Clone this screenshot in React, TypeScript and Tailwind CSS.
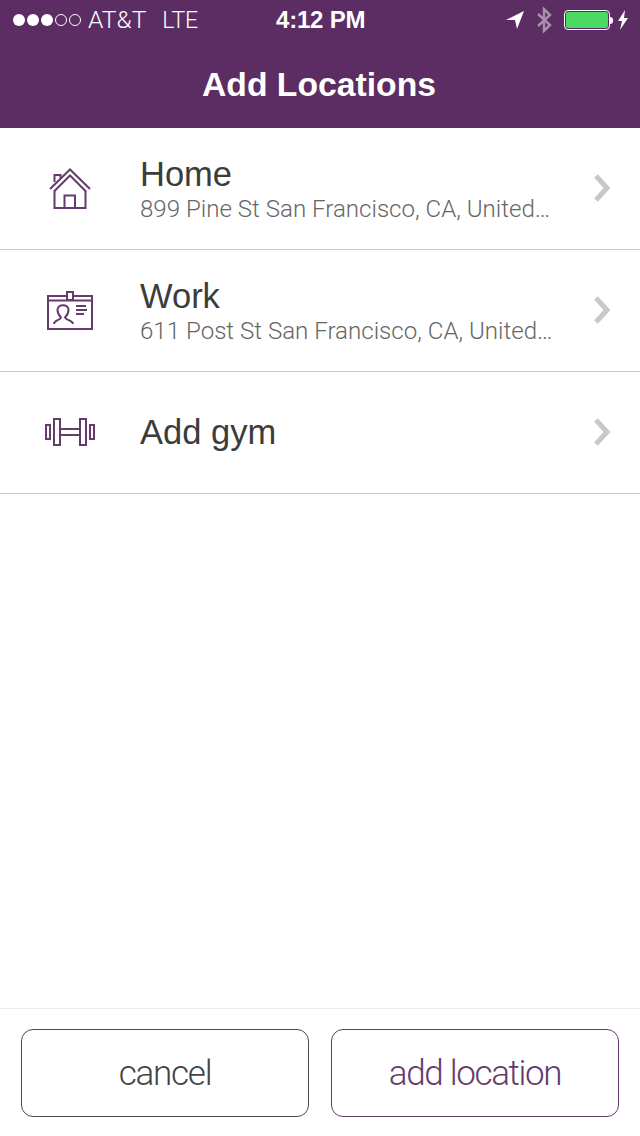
import React from 'react';

const SANS = 'font-["Liberation_Sans",Arial,sans-serif]';
const LIGHT = 'font-["Roboto",Arial,sans-serif] font-light';

const HomeIcon = () => (
  <svg width="42" height="41" viewBox="0 0 42 41" fill="none" stroke="#653a6c" strokeWidth="2">
    <path d="M1 21 L21 1.5 L41 21" />
    <path d="M5.5 23 L21 7.5 L36.5 23" />
    <path d="M5.5 22 V40 H36.5 V22" />
    <path d="M15.5 40 V27.5 H26 V40" />
    <path d="M5.5 14 V7 H11.5 V10" />
  </svg>
);

const BadgeIcon = () => (
  <svg width="48" height="41" viewBox="0 0 48 41" fill="none" stroke="#653a6c" strokeWidth="2">
    <rect x="2" y="6" width="44" height="33" />
    <path d="M2 10.5 H46" />
    <rect x="21" y="2" width="6" height="8" fill="#fff" />
    <path d="M8 34 C8 30 14 30.5 15 27.5 C12.5 25 11.5 22 11.5 20 C11.5 13.5 22.5 13.5 22.5 20 C22.5 22 21.5 25 19 27.5 C20 30.5 26.5 30 27 34" />
    <path d="M30 16 H40 M30 20 H41 M30 24 H38" />
  </svg>
);

const GymIcon = () => (
  <svg width="50" height="28" viewBox="0 0 50 28" fill="none" stroke="#653a6c" strokeWidth="2">
    <rect x="1" y="7" width="4" height="14" />
    <rect x="9" y="1" width="6" height="26" />
    <rect x="35" y="1" width="6" height="26" />
    <rect x="45" y="7" width="4" height="14" />
    <path d="M15 11 H35 M15 17 H35" />
  </svg>
);

const StatusBar = () => (
  <div className={`flex h-10 items-center pl-[13px] pr-[12px] text-white ${SANS}`}>
    <div className="flex w-[200px] items-center">
      <div className="flex items-center gap-[2px]">
        <span className="h-[12px] w-[12px] rounded-full bg-white" />
        <span className="h-[12px] w-[12px] rounded-full bg-white" />
        <span className="h-[12px] w-[12px] rounded-full bg-white" />
        <span className="h-[12px] w-[12px] rounded-full border border-white" />
        <span className="h-[12px] w-[12px] rounded-full border border-white" />
      </div>
      <span className={`ml-[7px] text-[24.6px] leading-none ${LIGHT}`}>AT&amp;T</span>
      <span className={`ml-[16px] text-[23px] leading-none ${LIGHT}`}>LTE</span>
    </div>
    <span className="ml-[63px] text-[24px] font-bold leading-none tracking-[-0.2px]">4:12 PM</span>
    <div className="ml-auto flex items-center">
      <svg width="18" height="18" viewBox="0 0 18 18" fill="#fff"><path d="M0 9 L18 0 L11 18 L9 9 Z" /></svg>
      <svg className="ml-[12px]" width="16" height="26" viewBox="0 0 16 26" fill="none" stroke="#a78fac" strokeWidth="2.5">
        <path d="M2 7 L14 18 L8 24 V2 L14 8 L2 19" />
      </svg>
      <div className="ml-[12px] flex items-center">
        <div className="flex h-[20px] w-[46px] rounded-[4px] border border-white p-[1px]">
          <div className="h-full w-full rounded-[2px] bg-[#4cd964]" />
        </div>
        <span className="h-[7px] w-[3px] rounded-r-full bg-white" />
      </div>
      <svg className="ml-[5px]" width="10" height="20" viewBox="0 0 10 20" fill="#fff"><path d="M7 0 L0 11 H4 L2 20 L10 8 H6 Z" /></svg>
    </div>
  </div>
);

const Row = ({ icon, title, subtitle }: { icon: React.ReactNode; title: string; subtitle?: string }) => (
  <div className="flex h-[122px] items-center border-b border-[#c8c8c8] pb-px">
    <div className="flex w-[140px] justify-center">{icon}</div>
    <div className={`min-w-0 flex-1 ${subtitle ? 'pt-[2px]' : ''}`}>
      <div className={`text-[34.5px] leading-[38px] text-[#3c3c3c] ${SANS}`}>{title}</div>
      {subtitle && <div className={`mt-[2px] text-[24.1px] leading-[28px] text-[#666] ${LIGHT}`}>{subtitle}</div>}
    </div>
    <svg className="mr-[28px] ml-[32px]" width="18" height="28" viewBox="0 0 18 28" fill="none" stroke="#c7c7cc" strokeWidth="5">
      <path d="M2 2 L13 14 L2 26" />
    </svg>
  </div>
);

export default function App() {
  return (
    <div className="flex h-[1136px] w-[640px] flex-col bg-white">
      <header className="h-[128px] bg-[#5b2d62]">
        <StatusBar />
        <h1 className={`mt-[4px] pr-[2px] text-center text-[33.7px] font-bold leading-[80px] text-white ${SANS}`}>Add Locations</h1>
      </header>
      <main className="flex-1">
        <Row icon={<HomeIcon />} title="Home" subtitle="899 Pine St San Francisco, CA, United…" />
        <Row icon={<BadgeIcon />} title="Work" subtitle="611 Post St San Francisco, CA, United…" />
        <Row icon={<GymIcon />} title="Add gym" />
      </main>
      <footer className="flex h-[128px] gap-[22px] border-t border-[#eeeeee] px-[21px] pt-[20px]">
        <button className={`h-[88px] flex-1 rounded-[12px] border border-[#4a4a4a] pt-[2px] text-[35px] tracking-[-1.25px] text-[#444] ${LIGHT}`}>cancel</button>
        <button className={`h-[88px] flex-1 rounded-[12px] border border-[#653a6c] pt-[2px] text-[35px] tracking-[-1.35px] text-[#653a6c] ${LIGHT}`}>add location</button>
      </footer>
    </div>
  );
}
